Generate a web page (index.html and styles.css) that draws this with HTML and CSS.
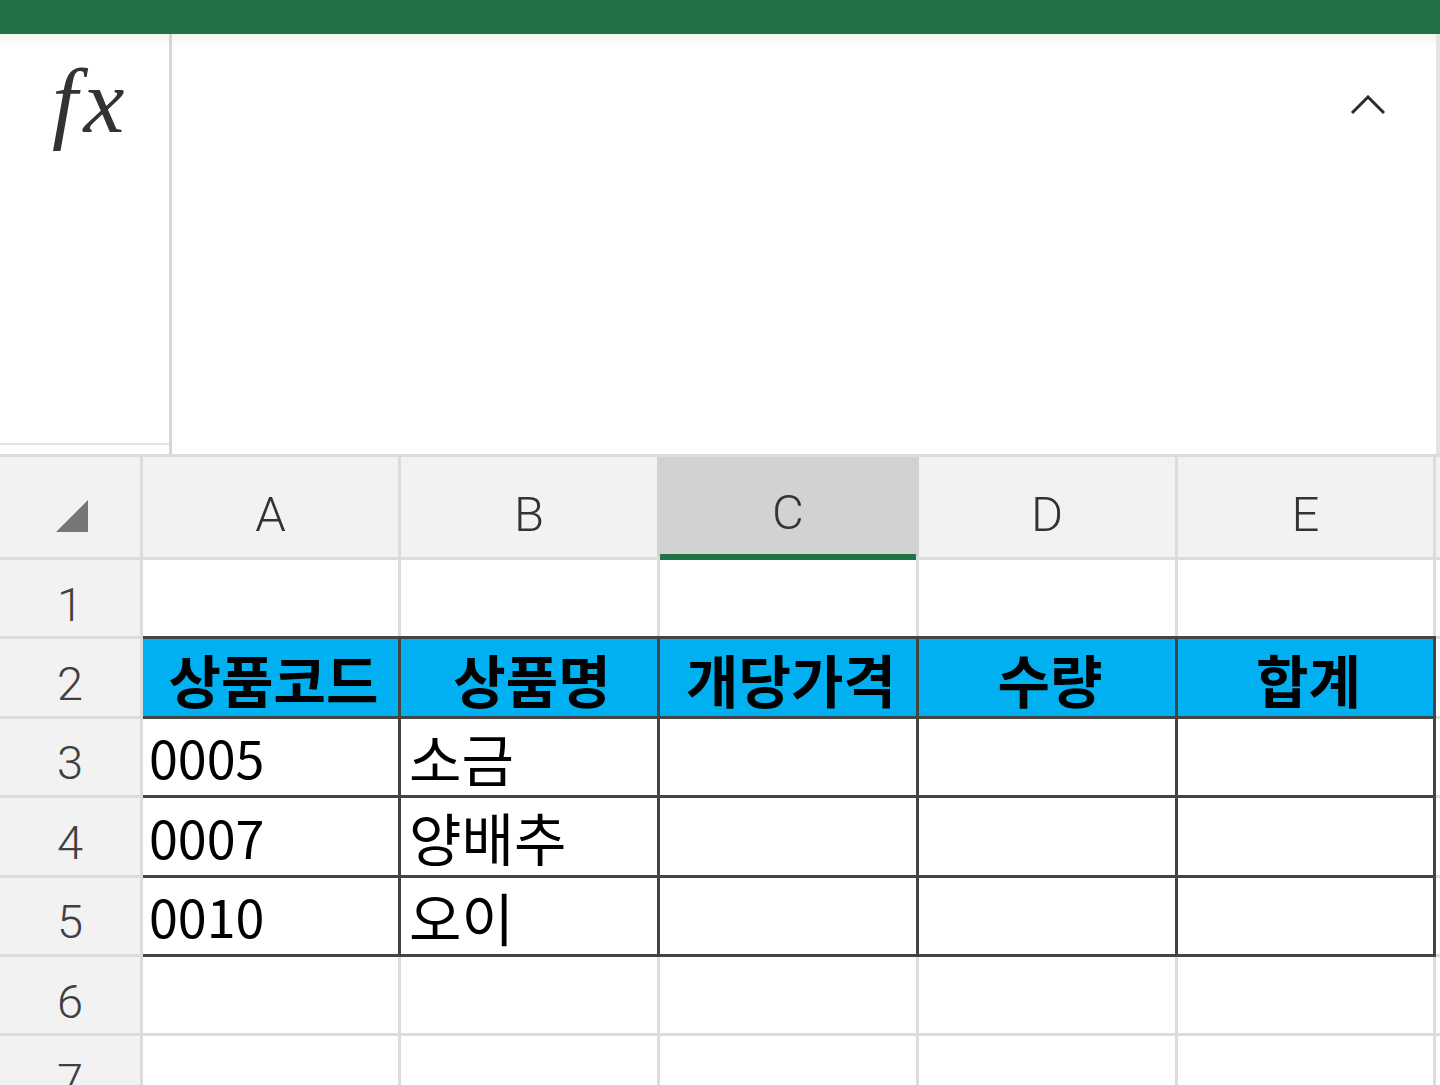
FILE: index.html
```html
<!DOCTYPE html>
<html lang="ko">
<head>
<meta charset="utf-8">
<title>Excel</title>
<link rel="stylesheet" href="styles.css">
</head>
<body>
<div class="topbar"></div>
<div class="formula">
  <div class="fx-box">
    <div class="fx-cell"><span class="fx">f</span><span class="fx fx-x">x</span></div>
  </div>
  <div class="fx-input">
    <svg class="chev" width="36" height="20" viewBox="0 0 36 20"><polyline points="2,18 18,2 34,18" fill="none" stroke="#2b2b2b" stroke-width="3"/></svg>
  </div>
  <div class="fx-scroll"></div>
</div>
<div class="sheet">
  <div class="corner"><svg width="34" height="34" viewBox="0 0 34 34"><polygon points="33,1 33,33 1,33" fill="#767676"/></svg></div>
  <div class="ch">A</div>
  <div class="ch">B</div>
  <div class="ch sel">C</div>
  <div class="ch">D</div>
  <div class="ch">E</div>
  <div class="ch"></div>

  <div class="rh">1</div>
  <div class="c"></div><div class="c"></div><div class="c"></div><div class="c"></div><div class="c"></div><div class="c"></div>

  <div class="rh">2</div>
  <div class="c t th"><span class="ko">상품코드</span></div>
  <div class="c t th"><span class="ko">상품명</span></div>
  <div class="c t th"><span class="ko">개당가격</span></div>
  <div class="c t th"><span class="ko">수량</span></div>
  <div class="c t th"><span class="ko">합계</span></div>
  <div class="c"></div>

  <div class="rh">3</div>
  <div class="c t">0005</div>
  <div class="c t"><span class="ko">소금</span></div>
  <div class="c t"></div><div class="c t"></div><div class="c t"></div>
  <div class="c"></div>

  <div class="rh">4</div>
  <div class="c t">0007</div>
  <div class="c t"><span class="ko">양배추</span></div>
  <div class="c t"></div><div class="c t"></div><div class="c t"></div>
  <div class="c"></div>

  <div class="rh">5</div>
  <div class="c t">0010</div>
  <div class="c t"><span class="ko">오이</span></div>
  <div class="c t"></div><div class="c t"></div><div class="c t"></div>
  <div class="c"></div>

  <div class="rh">6</div>
  <div class="c"></div><div class="c"></div><div class="c"></div><div class="c"></div><div class="c"></div><div class="c"></div>

  <div class="rh">7</div>
  <div class="c"></div><div class="c"></div><div class="c"></div><div class="c"></div><div class="c"></div><div class="c"></div>
</div>
</body>
</html>
```

FILE: styles.css
```css
html, body {
  margin: 0;
  padding: 0;
  width: 1440px;
  height: 1085px;
  overflow: hidden;
  background: #ffffff;
}

.topbar {
  height: 34px;
  background: #217346;
}

.formula {
  display: flex;
  height: 420px;
  background: linear-gradient(#f3f3f3 0, #ffffff 14px);
}

.fx-box {
  width: 169px;
  border-right: 3px solid #d6d6d6;
  display: flex;
  flex-direction: column;
}

.fx-cell {
  height: 411px;
  border-bottom: 2px solid #e6e6e6;
  box-sizing: border-box;
  padding: 21px 0 0 52px;
}

.fx {
  font-family: "Liberation Serif", serif;
  font-style: italic;
  font-size: 92px;
  line-height: 1;
  color: #333333;
}

.fx-x {
  margin-left: 6px;
}

.fx-input {
  flex: 1;
  display: flex;
  justify-content: flex-end;
  align-items: flex-start;
  padding: 61px 50px 0 0;
}

.fx-scroll {
  width: 4px;
  background: #e4e4e4;
}

.sheet {
  display: grid;
  grid-template-columns: 140px 255px 256px 256px 256px 255px 1fr;
  grid-template-rows: 100px repeat(7, 76.4px);
  gap: 3px;
  padding-top: 3px;
  background: #dcdcdc;
}

.corner, .ch, .rh {
  background: #f2f2f2;
  color: #333333;
  font-family: Roboto, "Noto Sans", sans-serif;
  font-weight: 300;
  display: flex;
  align-items: center;
  justify-content: center;
}

.corner {
  justify-content: flex-end;
  padding: 18px 51px 0 0;
}

.ch {
  font-size: 49px;
  padding-top: 14px;
}

.ch.sel {
  background: #d2d2d2;
  box-shadow: 0 3px 0 #217346, -3px 0 0 #d2d2d2, 3px 0 0 #d2d2d2;
  border-bottom: 3px solid #217346;
  box-sizing: border-box;
}

.rh {
  font-size: 47px;
  color: #404040;
  padding-top: 12px;
}

.c {
  background: #ffffff;
  font-family: "Noto Sans CJK KR", sans-serif;
  font-size: 52px;
  color: #000000;
  display: flex;
  align-items: center;
  padding-left: 6px;
  white-space: nowrap;
}

.ko {
  font-size: 57px;
  margin-left: 2px;
}

.t {
  box-shadow: 3px 0 0 #444444, 0 3px 0 #444444, 3px 3px 0 #444444;
}

.th {
  background: #00b0f0;
  font-weight: 700;
  justify-content: center;
  padding-left: 0;
  box-shadow: 3px 0 0 #444444, 0 3px 0 #444444, 3px 3px 0 #444444, 0 -3px 0 #444444, 3px -3px 0 #444444;
}

.th .ko {
  margin-left: 6px;
}
```
